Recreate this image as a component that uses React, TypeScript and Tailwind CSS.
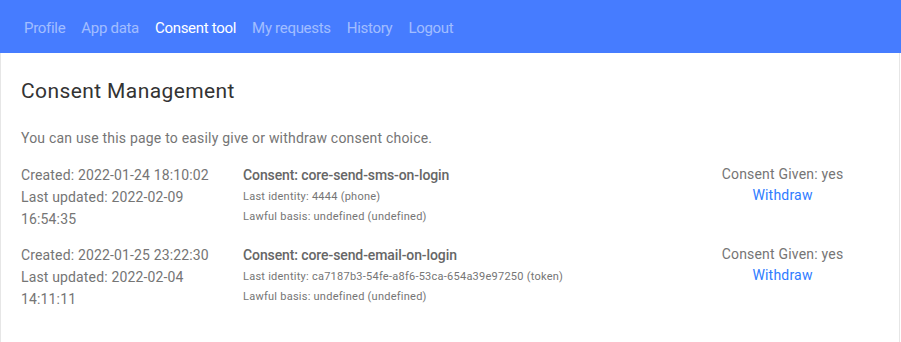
import React from "react";

const rows = [
  {
    created: "2022-01-24 18:10:02",
    updated: "2022-02-09 16:54:35",
    name: "core-send-sms-on-login",
    identity: "4444 (phone)",
  },
  {
    created: "2022-01-25 23:22:30",
    updated: "2022-02-04 14:11:11",
    name: "core-send-email-on-login",
    identity: "ca7187b3-54fe-a8f6-53ca-654a39e97250 (token)",
  },
];

export default function App() {
  const links = ["Profile", "App data", "Consent tool", "My requests", "History", "Logout"];
  return (
    <div className="min-h-[342px] bg-white" style={{ fontFamily: "Roboto, 'Liberation Sans', sans-serif" }}>
      <nav className="flex h-[53px] items-center bg-[#467cff] px-4 pt-[3px]">
        {links.map((l) => (
          <a
            key={l}
            className={`px-2 text-[15px] tracking-[-0.3px] ${l === "Consent tool" ? "text-white" : "text-white/50"}`}
          >
            {l}
          </a>
        ))}
      </nav>
      <div className="mr-px min-h-[289px] border-x border-[#e6e6e6] px-5 pt-[26px]">
        <h2 className="text-[21px] leading-[24px] tracking-[0.4px] text-[#333]">Consent Management</h2>
        <p className="mt-[25px] text-[14px] leading-[20px] tracking-[0.2px] text-[#757575]">
          You can use this page to easily give or withdraw consent choice.
        </p>
        <div className="mt-[16px] flex flex-col gap-[13.5px]">
          {rows.map((r) => (
            <div key={r.name} className="flex">
              <div className="w-[222px] pr-4 text-[14px] leading-[22px] tracking-[0.15px] text-[#757575]">
                <div>Created: {r.created}</div>
                <div>Last updated: {r.updated}</div>
              </div>
              <div className="flex-1 text-[#666]">
                <div className="text-[14px] font-medium leading-[22px] tracking-[-0.1px]">Consent: {r.name}</div>
                <div className="pt-px text-[11px] leading-[20px] tracking-[0.25px] text-[#757575]">
                  <div>Last identity: {r.identity}</div>
                  <div>Lawful basis: undefined (undefined)</div>
                </div>
              </div>
              <div className="flex w-[193px] flex-col items-center text-[14px] leading-[21px] tracking-[0.2px]">
                <div className="text-[#757575]">Consent Given: yes</div>
                <a className="text-[#2f7cff]">Withdraw</a>
              </div>
            </div>
          ))}
        </div>
      </div>
    </div>
  );
}
